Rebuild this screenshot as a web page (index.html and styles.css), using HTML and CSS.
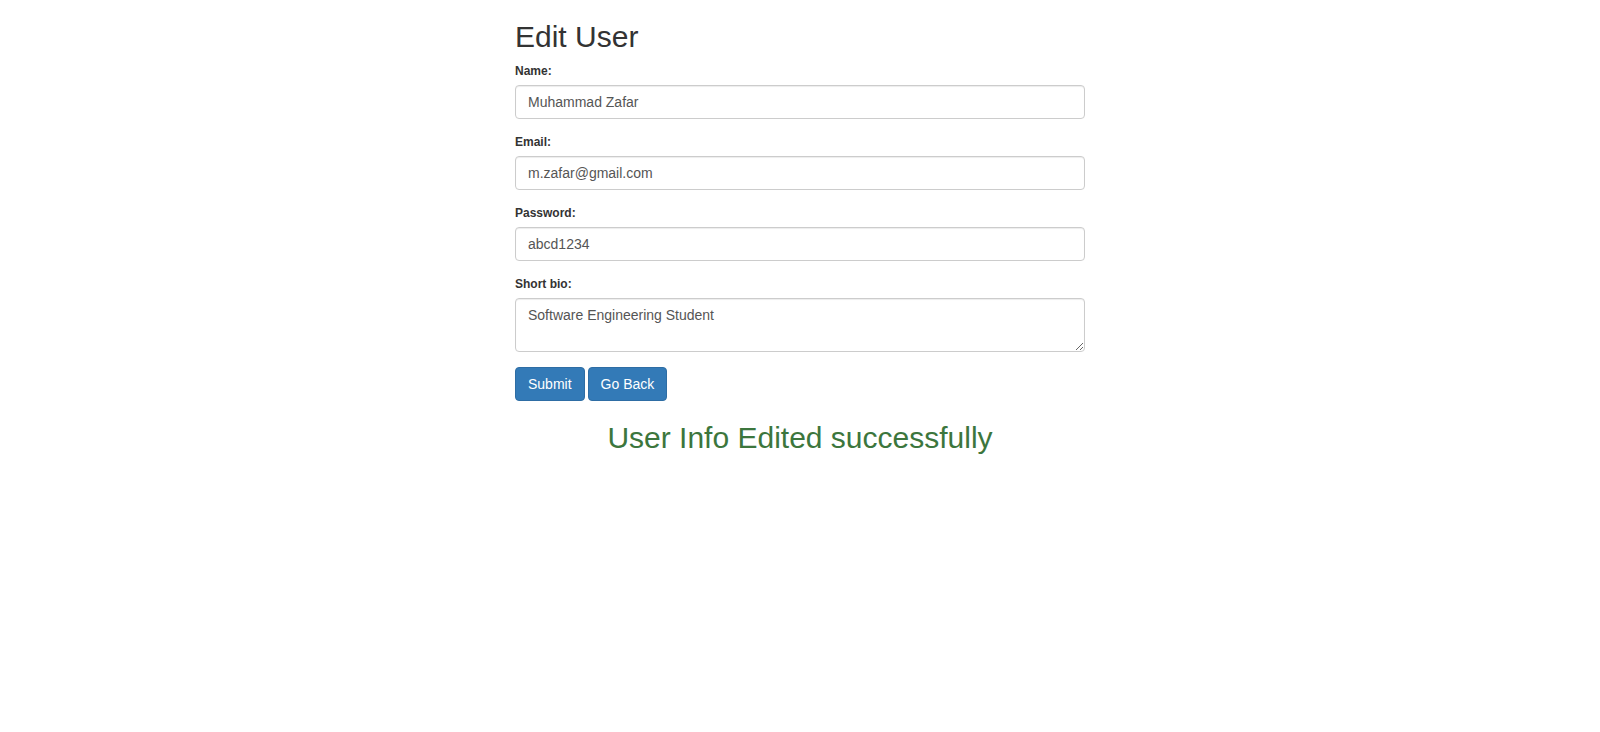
FILE: index.html
```html
<!DOCTYPE html>
<html lang="en">
<head>
<meta charset="utf-8">
<title>Edit User</title>
<link rel="stylesheet" href="styles.css">
</head>
<body>
<div class="page">
  <h2 class="title">Edit User</h2>
  <form class="form">
    <div class="group">
      <label class="label" for="name">Name:</label>
      <input class="control" id="name" type="text" value="Muhammad Zafar">
    </div>
    <div class="group">
      <label class="label" for="email">Email:</label>
      <input class="control" id="email" type="text" value="m.zafar@gmail.com">
    </div>
    <div class="group">
      <label class="label" for="pw">Password:</label>
      <input class="control" id="pw" type="text" value="abcd1234">
    </div>
    <div class="group">
      <label class="label" for="bio">Short bio:</label>
      <textarea class="control area" id="bio" rows="2">Software Engineering Student</textarea>
    </div>
    <div class="actions">
      <button type="button" class="btn">Submit</button>
      <button type="button" class="btn">Go Back</button>
    </div>
  </form>
  <h2 class="success">User Info Edited successfully</h2>
</div>
</body>
</html>
```

FILE: styles.css
```css
* { box-sizing: border-box; }
html, body {
  margin: 0;
  padding: 0;
  background: #fff;
}
body {
  font-family: "Liberation Sans", Arial, Helvetica, sans-serif;
  font-size: 14px;
  line-height: 1.42857143;
  color: #333;
}
.page {
  width: 570px;
  margin: 0 auto;
}
.title {
  margin: 20px 0 10px;
  font-size: 30px;
  font-weight: 500;
  line-height: 1.1;
  color: #333;
}
.form { margin: 0; }
.group {
  margin-bottom: 15px;
}
.label {
  display: block;
  font-size: 12px;
  line-height: 17px;
  font-weight: bold;
  margin-bottom: 5px;
  color: #333;
}
.control {
  display: block;
  width: 100%;
  height: 34px;
  padding: 6px 12px;
  margin: 0;
  font-family: inherit;
  font-size: 14px;
  line-height: 1.42857143;
  color: #555;
  background: #fff;
  border: 1px solid #ccc;
  border-radius: 4px;
  box-shadow: inset 0 1px 1px rgba(0,0,0,.075);
  outline: none;
}
.area {
  height: 54px;
  resize: vertical;
}
.actions {
  display: flex;
  gap: 3px;
}
.btn {
  display: inline-block;
  height: 34px;
  padding: 6px 12px;
  margin: 0;
  font-family: inherit;
  font-size: 14px;
  line-height: 1.42857143;
  color: #fff;
  background: #337ab7;
  border: 1px solid #2e6da4;
  border-radius: 4px;
  cursor: pointer;
}
.success {
  margin: 20px -200px 10px;
  text-align: center;
  font-size: 30px;
  font-weight: 500;
  line-height: 1.1;
  color: #3c763d;
}
```
